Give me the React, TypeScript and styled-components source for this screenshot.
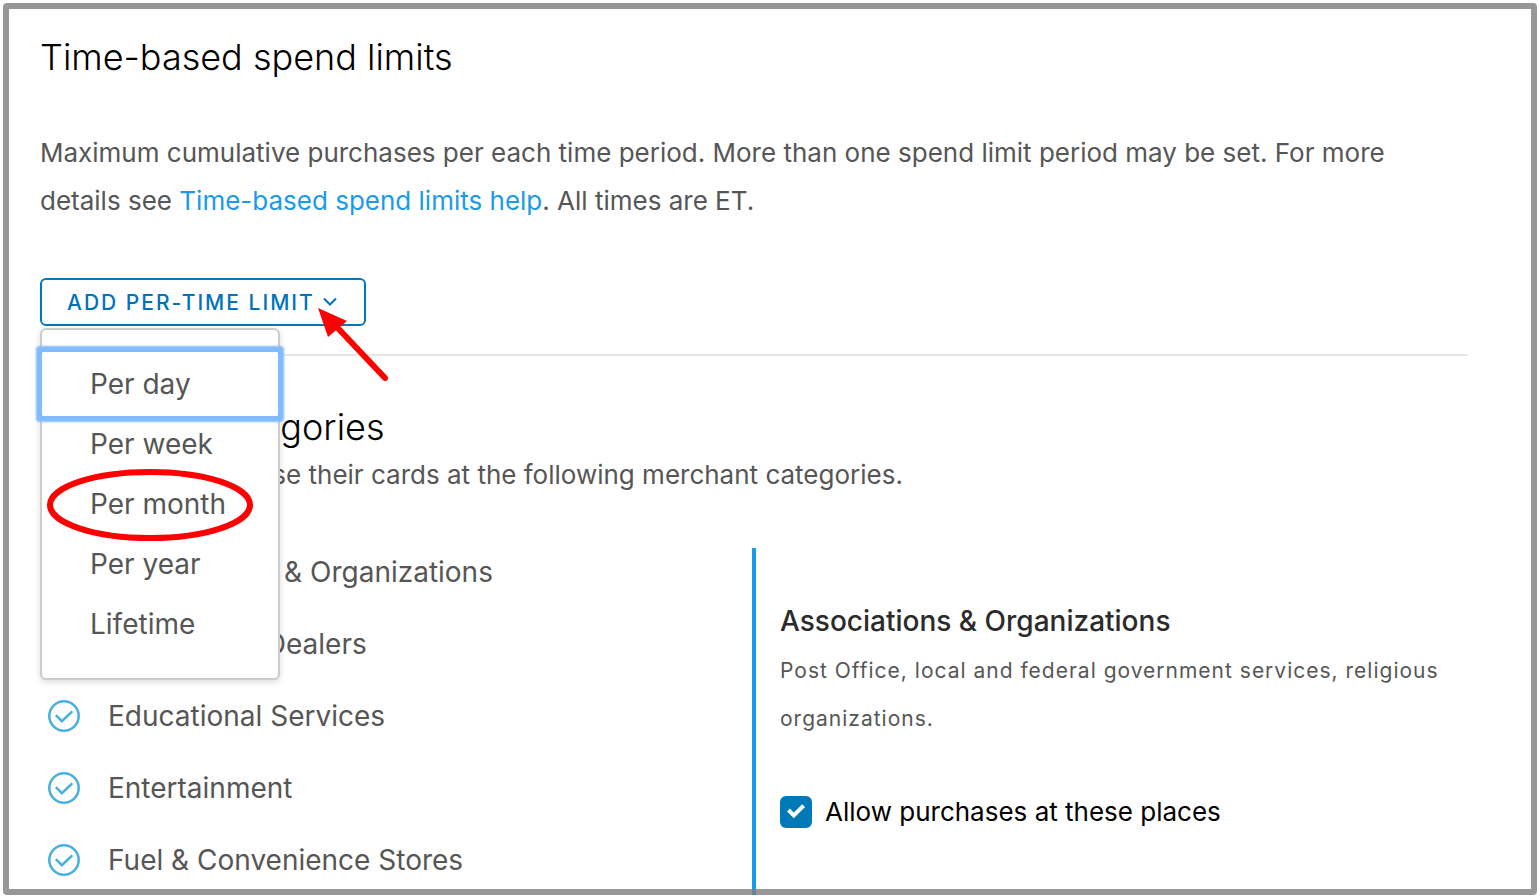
import React from "react";
import styled, { createGlobalStyle } from "styled-components";

const GlobalStyle = createGlobalStyle`
  *, *::before, *::after { box-sizing: border-box; }
  body {
    margin: 0;
    background: #fff;
    color: #565656;
    font-family: Inter, "Liberation Sans", sans-serif;
    font-size: 26px;
    line-height: 48px;
  }
  h1, h2, h3, p, ul { margin: 0; padding: 0; }
  ul { list-style: none; }
`;

const Page = styled.main`
  position: relative;
  min-height: calc(100vh - 4px);
  margin: 3px 3px 1px;
  padding: 30px 69px 0 37px;
  display: flex;
  flex-direction: column;

  &::after {
    content: "";
    position: absolute;
    inset: 0;
    border: 6px solid rgba(125, 125, 125, 0.8);
    border-radius: 4px;
    pointer-events: none;
  }
`;

const Title = styled.h2`
  color: #000;
  font-size: 36px;
  font-weight: 300;
  line-height: 48px;
`;

const Intro = styled.p`
  margin-top: 48px;
`;

const HelpLink = styled.a`
  color: #1a9be8;
  text-decoration: none;
`;

const DropdownBar = styled.div`
  padding: 53px 0 28px;
  border-bottom: 2px solid #e6e6e6;
`;

const Dropdown = styled.div`
  position: relative;
  width: max-content;
`;

const Trigger = styled.button`
  display: flex;
  align-items: center;
  gap: 8px;
  height: 48px;
  padding: 0 27px 0 25px;
  border: 2px solid #0079b8;
  border-radius: 6px;
  background: #fff;
  color: #0072ba;
  font: 500 21px Inter, "Liberation Sans", sans-serif;
  letter-spacing: 2px;
  text-transform: uppercase;
`;

const Menu = styled.ul`
  position: absolute;
  z-index: 1;
  top: 50px;
  left: 0;
  width: 240px;
  padding: 22px 0;
  border: 2px solid #ccc;
  border-radius: 6px;
  background: #fff;
  box-shadow: 0 2px 6px rgba(0, 0, 0, 0.15);

  li + li { margin-top: -4px; }
`;

const MenuItem = styled.button<{ $focused?: boolean }>`
  display: block;
  width: 100%;
  height: 64px;
  padding: 0 0 0 48px;
  border: 0;
  background: none;
  color: #565656;
  font: 400 28px Inter, "Liberation Sans", sans-serif;
  text-align: left;
  box-shadow: ${(p) => (p.$focused ? "0 0 0 4px #82bbfc, 0 0 2px 6px #82bbfc" : "none")};
  border-radius: 1px;
  outline: 0;
`;

const Ellipse = styled.svg`
  position: absolute;
  z-index: 2;
  top: 190px;
  left: 6px;
  pointer-events: none;
`;

const Arrow = styled.svg`
  position: absolute;
  z-index: 2;
  top: 28px;
  left: 276px;
  pointer-events: none;
`;

const Categories = styled.section`
  flex: 1;
  display: flex;
  flex-direction: column;
  padding-top: 47px;
`;

const Columns = styled.div`
  flex: 1;
  display: grid;
  grid-template-columns: 1fr 1fr;
  margin: 49px 4px 0 0;
`;

const CategoryList = styled.ul`
  display: flex;
  flex-direction: column;
  gap: 24px;
`;

const CategoryItem = styled.li`
  display: flex;
  align-items: center;
  gap: 28px;
  height: 48px;
  padding-left: 8px;
  font-size: 28px;
`;

const Detail = styled.div`
  padding: 49px 0 0 24px;
  border-left: 4px solid #1a9be8;
`;

const DetailTitle = styled.h3`
  color: #2b2b2b;
  font-size: 28px;
  font-weight: 500;
`;

const DetailText = styled.p`
  margin-top: 2px;
  font-size: 21px;
  letter-spacing: 1px;
`;

const CheckLabel = styled.label`
  display: flex;
  align-items: center;
  gap: 13px;
  margin-top: 45px;
  color: #000;
`;

const Check = styled.span`
  position: relative;
  display: flex;
  width: 32px;
  height: 32px;

  input {
    appearance: none;
    width: 32px;
    height: 32px;
    margin: 0;
    border-radius: 6px;
    background: #0079b8;
  }

  svg {
    position: absolute;
    inset: 0;
    pointer-events: none;
  }
`;

const CheckedCircle = () => (
  <svg width="32" height="32" viewBox="0 0 32 32" fill="none" stroke="#49afe0" strokeWidth="2.5" aria-hidden="true">
    <circle cx="16" cy="16" r="14.7" />
    <path d="M7.8 15.2 13.9 21.2 24.3 11.3" />
  </svg>
);

const periods = ["Per day", "Per week", "Per month", "Per year", "Lifetime"];

const categories = [
  "Associations & Organizations",
  "Automobile Dealers",
  "Educational Services",
  "Entertainment",
  "Fuel & Convenience Stores",
];

export default function App() {
  return (
    <>
      <GlobalStyle />
      <Page>
        <Title as="h1">Time-based spend limits</Title>
        <Intro>
          Maximum cumulative purchases per each time period. More than one spend limit period may be set. For more
          details see <HelpLink href="#help">Time-based spend limits help</HelpLink>. All times are ET.
        </Intro>
        <DropdownBar>
          <Dropdown>
            <Trigger type="button" aria-haspopup="menu" aria-expanded="true">
              Add per-time limit
              <svg width="14" height="10" viewBox="0 0 14 10" fill="none" stroke="currentColor" strokeWidth="2" aria-hidden="true">
                <path d="M1 1.5 7 7.5 13 1.5" />
              </svg>
            </Trigger>
            <Menu role="menu">
              {periods.map((period, i) => (
                <li key={period} role="none">
                  <MenuItem type="button" role="menuitem" $focused={i === 0}>
                    {period}
                  </MenuItem>
                </li>
              ))}
            </Menu>
            <Ellipse width="208" height="74" viewBox="0 0 208 74" aria-hidden="true">
              <ellipse cx="104" cy="37" rx="100" ry="33" fill="none" stroke="#fe0000" strokeWidth="6" />
            </Ellipse>
            <Arrow width="74" height="78" viewBox="0 0 74 78" aria-hidden="true">
              <path d="M18 18 69 72" stroke="#fe0000" strokeWidth="6" strokeLinecap="round" />
              <path d="M2 2 31 15 12 31Z" fill="#fe0000" />
            </Arrow>
          </Dropdown>
        </DropdownBar>
        <Categories>
          <Title>Merchant categories</Title>
          <p>Cardholders may use their cards at the following merchant categories.</p>
          <Columns>
            <CategoryList>
              {categories.map((name) => (
                <CategoryItem key={name}>
                  <CheckedCircle />
                  {name}
                </CategoryItem>
              ))}
            </CategoryList>
            <Detail>
              <DetailTitle>Associations &amp; Organizations</DetailTitle>
              <DetailText>Post Office, local and federal government services, religious organizations.</DetailText>
              <CheckLabel>
                <Check>
                  <input type="checkbox" defaultChecked />
                  <svg width="32" height="32" viewBox="0 0 32 32" fill="none" stroke="#fff" strokeWidth="4" aria-hidden="true">
                    <path d="M8.5 14 13.8 19.4 23.6 9.6" />
                  </svg>
                </Check>
                Allow purchases at these places
              </CheckLabel>
            </Detail>
          </Columns>
        </Categories>
      </Page>
    </>
  );
}
